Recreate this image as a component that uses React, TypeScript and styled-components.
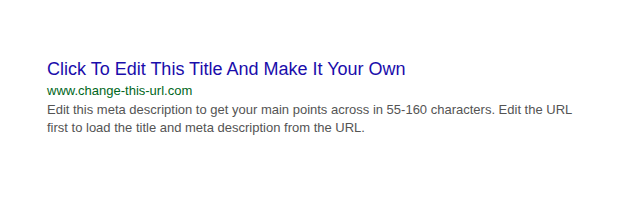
import styled, { createGlobalStyle } from 'styled-components';

const GlobalStyle = createGlobalStyle`
  body {
    margin: 0;
    background: #ffffff;
    font-family: "Liberation Sans", Arial, sans-serif;
  }
`;

const Page = styled.div`
  padding: 58px 0 0 47px;
`;

const Snippet = styled.div`
  width: 540px;
  display: flex;
  flex-direction: column;
`;

const Title = styled.a`
  font-size: 18px;
  line-height: 22px;
  color: #1a0dab;
  text-decoration: none;
  cursor: pointer;
`;

const Url = styled.div`
  margin: 2px 0 1px;
  font-size: 13px;
  line-height: 18px;
  color: #006621;
`;

const Description = styled.div`
  font-size: 13px;
  line-height: 18px;
  color: #545454;
`;

export default function App() {
  return (
    <>
      <GlobalStyle />
      <Page>
        <Snippet>
          <Title>Click To Edit This Title And Make It Your Own</Title>
          <Url>www.change-this-url.com</Url>
          <Description>
            Edit this meta description to get your main points across in 55-160 characters. Edit the URL
            first to load the title and meta description from the URL.
          </Description>
        </Snippet>
      </Page>
    </>
  );
}
